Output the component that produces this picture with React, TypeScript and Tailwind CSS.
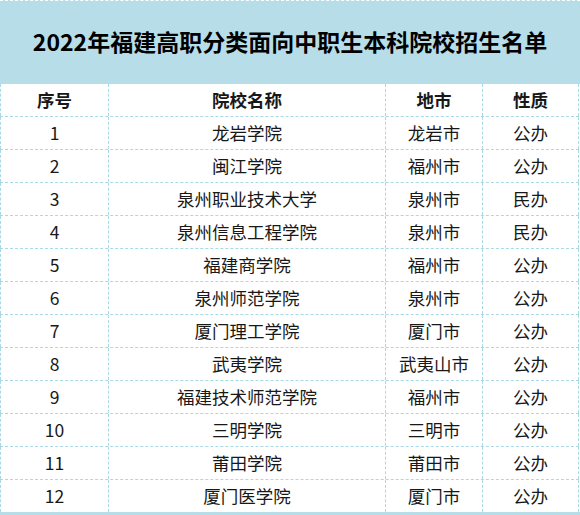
import React from 'react';

const rows: [string, string, string, string][] = [
  ['1', '龙岩学院', '龙岩市', '公办'],
  ['2', '闽江学院', '福州市', '公办'],
  ['3', '泉州职业技术大学', '泉州市', '民办'],
  ['4', '泉州信息工程学院', '泉州市', '民办'],
  ['5', '福建商学院', '福州市', '公办'],
  ['6', '泉州师范学院', '泉州市', '公办'],
  ['7', '厦门理工学院', '厦门市', '公办'],
  ['8', '武夷学院', '武夷山市', '公办'],
  ['9', '福建技术师范学院', '福州市', '公办'],
  ['10', '三明学院', '三明市', '公办'],
  ['11', '莆田学院', '莆田市', '公办'],
  ['12', '厦门医学院', '厦门市', '公办'],
];

const cell = 'flex items-center justify-center border-r border-dashed border-[#a9d9e7]';

export default function App() {
  return (
    <div className="w-[580px] h-[515px] bg-white font-['Microsoft_YaHei','Noto_Sans_CJK_SC',sans-serif] text-[#181818]">
      {/* 标题 */}
      <div className="h-[84px] bg-[#b7dde8] border-t border-dashed border-white flex items-center justify-center pb-[2px]">
        <h1 className="text-[23px] font-bold text-black">
          2022年福建高职分类面向中职生本科院校招生名单
        </h1>
      </div>

      <div className="w-[579px]">
        <div className="grid grid-cols-[109px_277px_97px_96px] h-[33px] border-b border-dashed border-[#a9d9e7] text-[17.5px] font-bold">
          <div className={`${cell} border-l`}>序号</div>
          <div className={cell}>院校名称</div>
          <div className={cell}>地市</div>
          <div className={cell}>性质</div>
        </div>
        {rows.map((r, i) => (
          <div
            key={r[0]}
            className={`grid grid-cols-[109px_277px_97px_96px] text-[17.5px] ${
              i === rows.length - 1 ? 'h-[32px]' : 'h-[33px] border-b border-dashed border-[#a9d9e7]'
            }`}
          >
            <div className={`${cell} border-l`}>{r[0]}</div>
            <div className={cell}>{r[1]}</div>
            <div className={cell}>{r[2]}</div>
            <div className={cell}>{r[3]}</div>
          </div>
        ))}
      </div>
      <div className="h-[3px] bg-[#b7dde8]" />
    </div>
  );
}
